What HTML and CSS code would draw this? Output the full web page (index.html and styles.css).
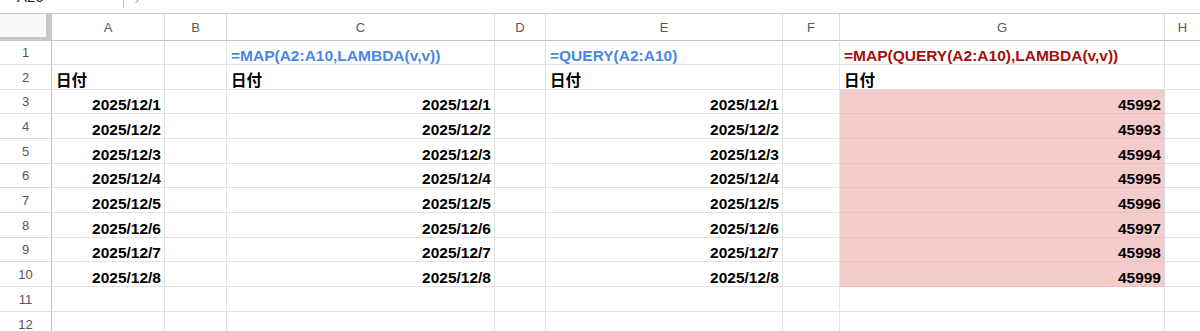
FILE: index.html
```html
<!DOCTYPE html>
<html lang="ja">
<head>
<meta charset="utf-8">
<title>Sheet</title>
<link rel="stylesheet" href="styles.css">
</head>
<body>
<div class="topbar">
  <div class="namebox">A26</div>
  <div class="divider"></div>
  <div class="fx">fx</div>
</div>
<div class="sheet">
  <div class="corner"></div>
  <div class="ch">A</div><div class="ch">B</div><div class="ch">C</div><div class="ch">D</div><div class="ch">E</div><div class="ch">F</div><div class="ch">G</div><div class="ch last">H</div>

  <div class="rh">1</div>
  <div class="c"></div><div class="c"></div><div class="c b blue">=MAP(A2:A10,LAMBDA(v,v))</div><div class="c"></div><div class="c b blue">=QUERY(A2:A10)</div><div class="c"></div><div class="c b red">=MAP(QUERY(A2:A10),LAMBDA(v,v))</div><div class="c last"></div>

  <div class="rh">2</div>
  <div class="c b">日付</div><div class="c"></div><div class="c b">日付</div><div class="c"></div><div class="c b">日付</div><div class="c"></div><div class="c b">日付</div><div class="c last"></div>

  <div class="rh">3</div>
  <div class="c b r">2025/12/1</div><div class="c"></div><div class="c b r">2025/12/1</div><div class="c"></div><div class="c b r">2025/12/1</div><div class="c"></div><div class="c b r pink">45992</div><div class="c last"></div>

  <div class="rh">4</div>
  <div class="c b r">2025/12/2</div><div class="c"></div><div class="c b r">2025/12/2</div><div class="c"></div><div class="c b r">2025/12/2</div><div class="c"></div><div class="c b r pink">45993</div><div class="c last"></div>

  <div class="rh">5</div>
  <div class="c b r">2025/12/3</div><div class="c"></div><div class="c b r">2025/12/3</div><div class="c"></div><div class="c b r">2025/12/3</div><div class="c"></div><div class="c b r pink">45994</div><div class="c last"></div>

  <div class="rh">6</div>
  <div class="c b r">2025/12/4</div><div class="c"></div><div class="c b r">2025/12/4</div><div class="c"></div><div class="c b r">2025/12/4</div><div class="c"></div><div class="c b r pink">45995</div><div class="c last"></div>

  <div class="rh">7</div>
  <div class="c b r">2025/12/5</div><div class="c"></div><div class="c b r">2025/12/5</div><div class="c"></div><div class="c b r">2025/12/5</div><div class="c"></div><div class="c b r pink">45996</div><div class="c last"></div>

  <div class="rh">8</div>
  <div class="c b r">2025/12/6</div><div class="c"></div><div class="c b r">2025/12/6</div><div class="c"></div><div class="c b r">2025/12/6</div><div class="c"></div><div class="c b r pink">45997</div><div class="c last"></div>

  <div class="rh">9</div>
  <div class="c b r">2025/12/7</div><div class="c"></div><div class="c b r">2025/12/7</div><div class="c"></div><div class="c b r">2025/12/7</div><div class="c"></div><div class="c b r pink">45998</div><div class="c last"></div>

  <div class="rh">10</div>
  <div class="c b r">2025/12/8</div><div class="c"></div><div class="c b r">2025/12/8</div><div class="c"></div><div class="c b r">2025/12/8</div><div class="c"></div><div class="c b r pink">45999</div><div class="c last"></div>

  <div class="rh">11</div>
  <div class="c"></div><div class="c"></div><div class="c"></div><div class="c"></div><div class="c"></div><div class="c"></div><div class="c"></div><div class="c last"></div>

  <div class="rh">12</div>
  <div class="c"></div><div class="c"></div><div class="c"></div><div class="c"></div><div class="c"></div><div class="c"></div><div class="c"></div><div class="c last"></div>
</div>
</body>
</html>
```
FILE: styles.css
```css
html, body {
  margin: 0;
  padding: 0;
  background: #ffffff;
  overflow: hidden;
}

body {
  width: 1200px;
  height: 331px;
  font-family: "Liberation Sans", Arial, "Noto Sans CJK JP", sans-serif;
  color: #000;
}

.topbar {
  height: 13px;
  border-bottom: 1px solid #c7c7c7;
  display: flex;
  align-items: flex-start;
  overflow: hidden;
  background: #fff;
}

.namebox {
  width: 106px;
  padding-left: 17px;
  margin-top: -12px;
  font-size: 15px;
  line-height: 17px;
  color: #1f1f1f;
}

.divider {
  width: 1px;
  height: 8px;
  background: #c7c7c7;
}

.fx {
  margin-left: 12px;
  margin-top: -13px;
  font-family: "DejaVu Serif", serif;
  font-style: italic;
  font-size: 15px;
  line-height: 17px;
  color: #9aa0a6;
}

.sheet {
  display: grid;
  grid-template-columns: 52px 113px 62px 268px 51px 237px 57px 325px 1fr;
  grid-template-rows: 27px 24px 25px 24px 25px 25px 24px 25px 25px 24px 25px 25px 25px;
}

.corner {
  background: #f8f9fa;
  border-right: 6px solid #c8c8c8;
  border-bottom: 4px solid #c8c8c8;
}

.ch {
  border-right: 1px solid #dcdcdc;
  border-bottom: 1px solid #c4c4c4;
  display: flex;
  align-items: center;
  justify-content: center;
  font-size: 13px;
  color: #575757;
  background: #fff;
}

.rh {
  border-right: 1px solid #c4c4c4;
  border-bottom: 1px solid #dcdcdc;
  display: flex;
  align-items: center;
  justify-content: center;
  font-size: 13px;
  color: #575757;
  background: #fff;
}

.c {
  border-right: 1px solid #e2e2e2;
  border-bottom: 1px solid #e2e2e2;
  display: flex;
  align-items: flex-end;
  padding: 0 3px 0 4px;
  font-size: 15.5px;
  line-height: 17px;
  white-space: nowrap;
  min-width: 0;
}

.last {
  border-right: none;
}

.b {
  font-weight: bold;
}

.r {
  justify-content: flex-end;
}

.blue {
  color: #4a86e8;
}

.red {
  color: #a50e0e;
}

.pink {
  background: #f4cccc;
  border-bottom-color: #e7c3c3;
  border-right-color: #d9d9d9;
}
```
